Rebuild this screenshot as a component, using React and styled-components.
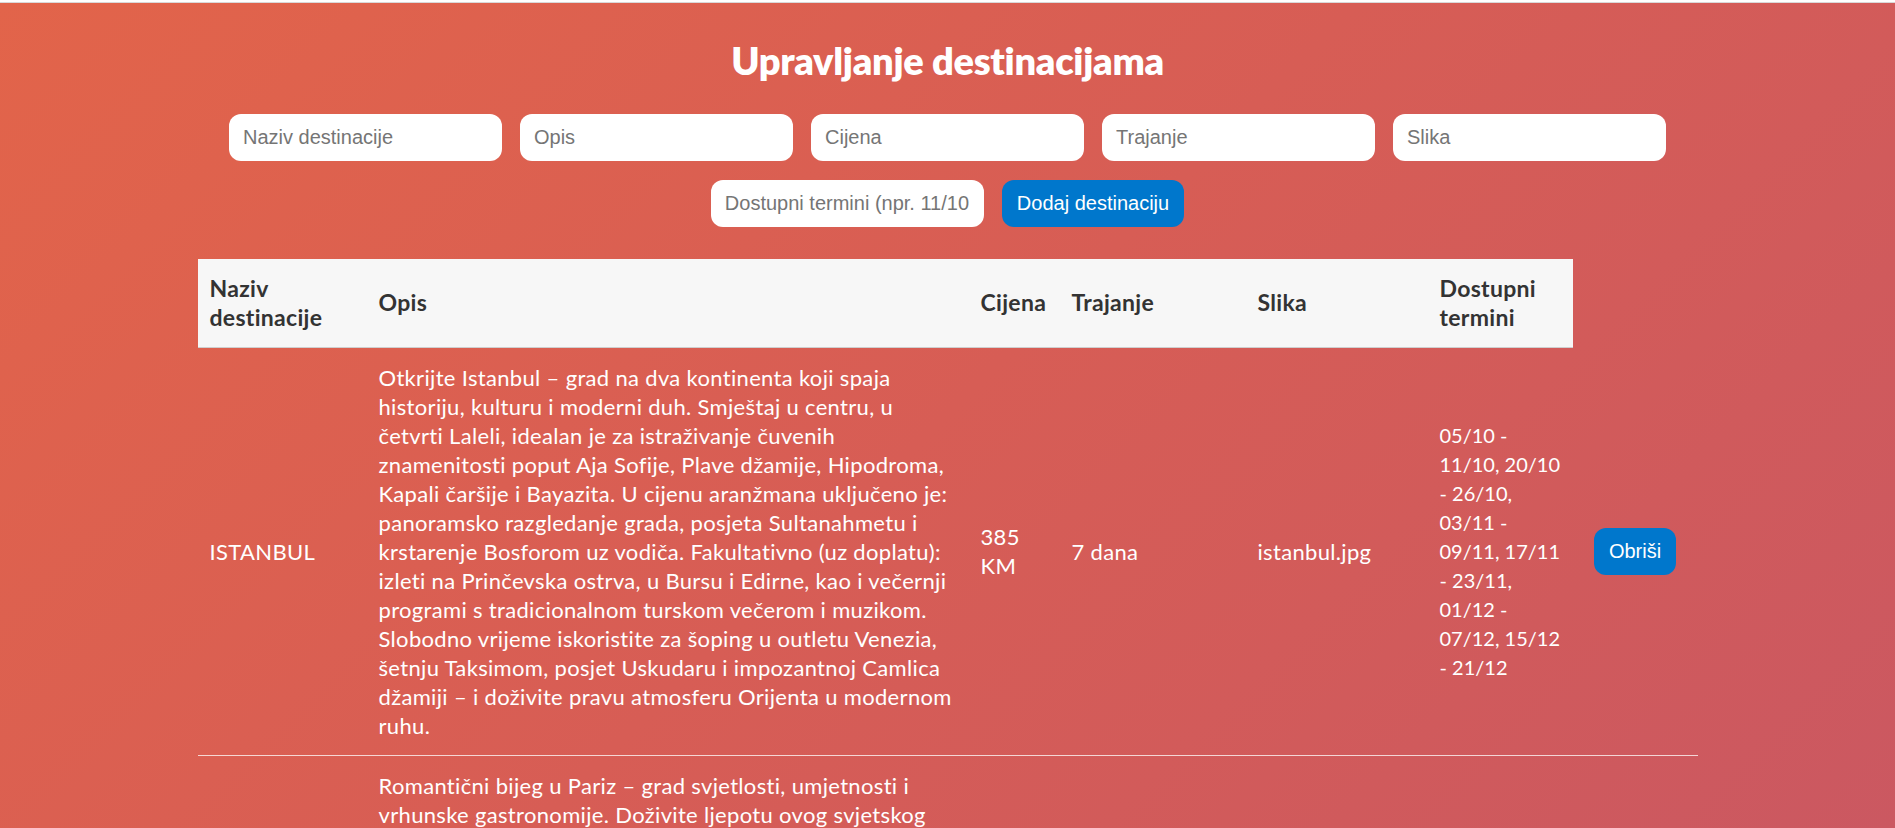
import React from 'react';
import styled, { createGlobalStyle } from 'styled-components';

const GlobalStyle = createGlobalStyle`
  * {
    box-sizing: border-box;
  }
  body {
    margin: 0;
    font-family: 'Lato', 'Open Sans', sans-serif;
    background: linear-gradient(135deg, #e2644a 0%, #d75d55 50%, #cb5861 100%);
    background-attachment: fixed;
    min-height: 100vh;
  }
`;

const TopStrip = styled.div`
  height: 3px;
  background-color: #ffffff;
  border-bottom: 1px solid #d9d9d9;
`;

const Page = styled.div`
  display: flex;
  flex-direction: column;
  align-items: center;
  padding-top: 34px;
`;

const Title = styled.h1`
  margin: 0 0 29px 0;
  font-size: 38px;
  font-weight: 800;
  line-height: 1.26;
  color: #ffffff;
  letter-spacing: -0.3px;
`;

const Form = styled.form`
  display: flex;
  flex-wrap: wrap;
  justify-content: center;
  gap: 19px 18px;
  max-width: 1500px;
  margin-bottom: 32px;
`;

const Input = styled.input`
  width: 273px;
  height: 47px;
  padding: 0 14px;
  border: none;
  border-radius: 12px;
  background-color: #ffffff;
  font-family: 'Liberation Sans', Arial, sans-serif;
  font-size: 20px;
  color: #333;
  outline: none;

  &::placeholder {
    color: #757575;
  }
`;

const BlueButton = styled.button`
  height: 47px;
  padding: 0 15px;
  border: none;
  border-radius: 12px;
  background-color: #0077cc;
  color: #ffffff;
  font-family: 'Liberation Sans', Arial, sans-serif;
  font-size: 20px;
  cursor: pointer;
`;

const Table = styled.table`
  width: 1500px;
  border-collapse: collapse;
  table-layout: fixed;
`;

const Th = styled.th`
  background-color: #f7f7f7;
  border-bottom: 1px solid #cfcfcf;
  padding: 15px 12px;
  text-align: left;
  vertical-align: middle;
  font-size: 23px;
  font-weight: 700;
  line-height: 29px;
  letter-spacing: 0.3px;
  color: #333333;
`;

const Row = styled.tr`
  border-bottom: 1px solid rgba(255, 255, 255, 0.75);
`;

const Td = styled.td`
  padding: 15px 12px;
  vertical-align: middle;
  text-align: ${props => (props.$center ? 'center' : 'left')};
  font-size: ${props => (props.$compact ? 20 : 22)}px;
  letter-spacing: ${props => (props.$compact ? 0 : 0.33)}px;
  line-height: 29px;
  color: #ffffff;
`;

const columns = [169, 602, 91, 186, 182, 145, 125];

const destinations = [
  {
    naziv: 'ISTANBUL',
    opis:
      'Otkrijte Istanbul – grad na dva kontinenta koji spaja historiju, kulturu i moderni duh. Smještaj u centru, u četvrti Laleli, idealan je za istraživanje čuvenih znamenitosti poput Aja Sofije, Plave džamije, Hipodroma, Kapali čaršije i Bayazita. U cijenu aranžmana uključeno je: panoramsko razgledanje grada, posjeta Sultanahmetu i krstarenje Bosforom uz vodiča. Fakultativno (uz doplatu): izleti na Prinčevska ostrva, u Bursu i Edirne, kao i večernji programi s tradicionalnom turskom večerom i muzikom. Slobodno vrijeme iskoristite za šoping u outletu Venezia, šetnju Taksimom, posjet Uskudaru i impozantnoj Camlica džamiji – i doživite pravu atmosferu Orijenta u modernom ruhu.',
    cijena: '385 KM',
    trajanje: '7 dana',
    slika: 'istanbul.jpg',
    termini: '05/10 - 11/10, 20/10 - 26/10, 03/11 - 09/11, 17/11 - 23/11, 01/12 - 07/12, 15/12 - 21/12',
  },
  {
    naziv: 'PARIZ',
    opis:
      'Romantični bijeg u Pariz – grad svjetlosti, umjetnosti i vrhunske gastronomije. Doživite ljepotu ovog svjetskog grada kroz šetnje uz obale Seine, posjet Eiffelovom tornju, Louvreu, katedrali Notre-Dame i Slavoluku pobjede. U cijenu aranžmana uključeno je: avionski prevoz, smještaj u hotelu sa doručkom i panoramsko razgledanje grada uz vodiča. Fakultativno (uz doplatu): izlet u Versailles, krstarenje Seinom i posjet Disneylandu. Slobodno vrijeme iskoristite za šetnju Montmartreom, kafiće Latinske četvrti i šoping na Champs-Élysées.',
    cijena: '690 KM',
    trajanje: '5 dana',
    slika: 'pariz.jpg',
    termini: '08/10 - 12/10, 22/10 - 26/10, 05/11 - 09/11, 19/11 - 23/11',
  },
];

export default function App() {
  return (
    <>
      <GlobalStyle />
      <TopStrip />
      <Page>
        <Title>Upravljanje destinacijama</Title>
        <Form onSubmit={e => e.preventDefault()}>
          <Input placeholder="Naziv destinacije" />
          <Input placeholder="Opis" />
          <Input placeholder="Cijena" />
          <Input placeholder="Trajanje" />
          <Input placeholder="Slika" />
          <Input placeholder="Dostupni termini (npr. 11/10 - 17/10, 20/10 - 26/10)" />
          <BlueButton type="submit">Dodaj destinaciju</BlueButton>
        </Form>
        <Table>
          <colgroup>
            {columns.map((w, i) => (
              <col key={i} style={{ width: w }} />
            ))}
          </colgroup>
          <thead>
            <tr>
              <Th>Naziv destinacije</Th>
              <Th>Opis</Th>
              <Th>Cijena</Th>
              <Th>Trajanje</Th>
              <Th>Slika</Th>
              <Th>Dostupni termini</Th>
            </tr>
          </thead>
          <tbody>
            {destinations.map(d => (
              <Row key={d.naziv}>
                <Td>{d.naziv}</Td>
                <Td>{d.opis}</Td>
                <Td>{d.cijena}</Td>
                <Td>{d.trajanje}</Td>
                <Td>{d.slika}</Td>
                <Td $compact>{d.termini}</Td>
                <Td $center>
                  <BlueButton type="button">Obriši</BlueButton>
                </Td>
              </Row>
            ))}
          </tbody>
        </Table>
      </Page>
    </>
  );
}
